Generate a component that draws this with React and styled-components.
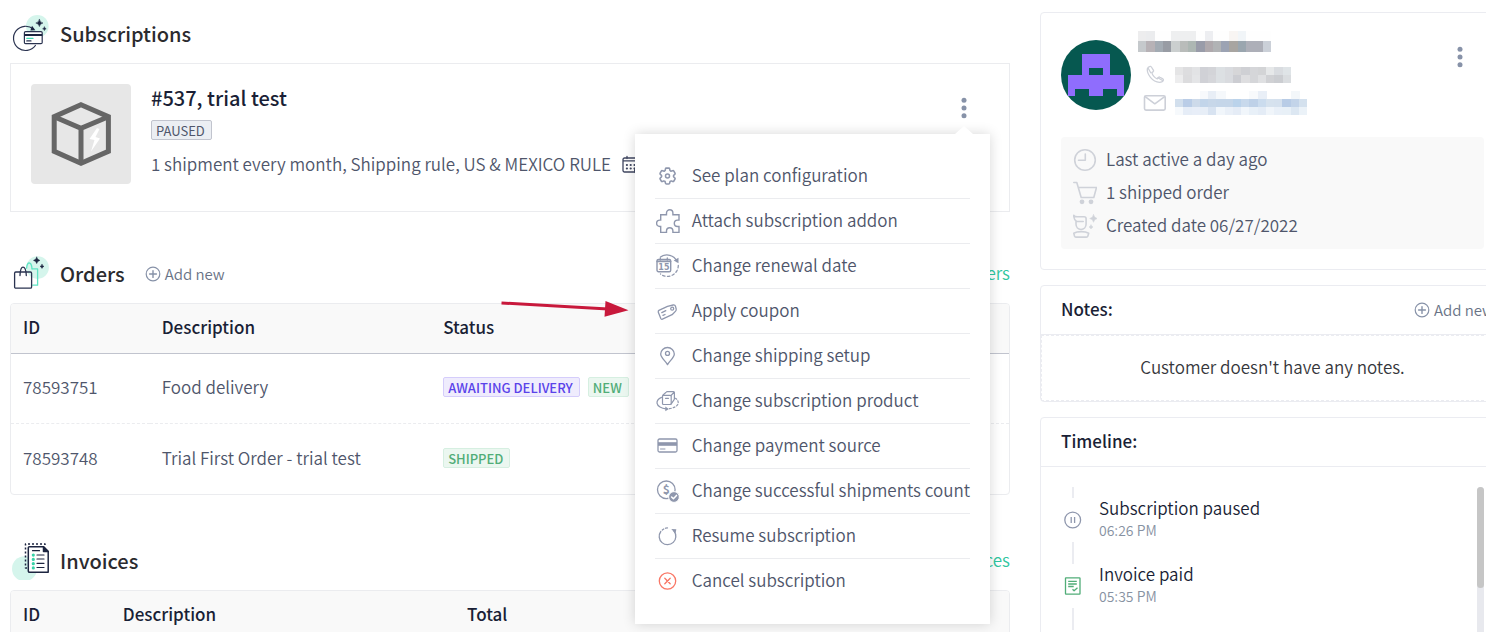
import React from 'react';
import styled, { createGlobalStyle, css } from 'styled-components';

const GlobalStyle = createGlobalStyle`
    * {
        box-sizing: border-box;
    }
    body {
        margin: 0;
        background: #ffffff;
        color: #4f566b;
        font-family: 'Source Sans Pro', 'Noto Sans CJK SC', 'Noto Sans', sans-serif;
        font-size: 17px;
        font-weight: 350;
        line-height: 24px;
    }
    h2, h3, p, ul {
        margin: 0;
        padding: 0;
    }
    ul {
        list-style: none;
    }
    button {
        background: none;
        border: 0;
        padding: 0;
        color: inherit;
        font: inherit;
        cursor: pointer;
    }
    svg {
        display: block;
        flex: none;
    }
`;

const Page = styled.div`
    position: relative;
    height: 100vh;
    overflow: hidden;
    padding-left: 10px;
`;

const Columns = styled.div`
    display: grid;
    grid-template-columns: minmax(0, 1000fr) minmax(0, 465fr);
    gap: 30px;
    margin-right: -19px;
`;

const MainColumn = styled.main`
    padding-top: 5px;
`;

const SideColumn = styled.aside`
    display: flex;
    flex-direction: column;
    gap: 15px;
    padding-top: 12px;
`;

const Section = styled.section`
    padding-bottom: ${({ $space }) => $space || 33}px;
`;

const SectionHeader = styled.header`
    display: flex;
    align-items: center;
    height: 58px;
    padding-left: 2px;
`;

const SectionTitle = styled.h2`
    margin-left: 10px;
    color: #2b2b2f;
    font-size: 20px;
    font-weight: 500;
    line-height: 30px;
`;

const AddButton = styled.button`
    display: flex;
    align-items: center;
    gap: 4px;
    margin-left: ${({ $push }) => ($push ? 'auto' : '20px')};
    color: #697386;
    font-size: 15px;
    line-height: 20px;
    white-space: nowrap;
`;

const ViewAll = styled.a`
    margin-left: auto;
    padding-bottom: 2px;
    color: #2fc6a0;
    text-decoration: none;
`;

const SubscriptionCard = styled.article`
    position: relative;
    display: flex;
    gap: 20px;
    padding: 20px;
    min-height: 149px;
    border: 1px solid #ebecef;
`;

const ProductImage = styled.div`
    width: 100px;
    height: 100px;
    border-radius: 4px;
    background: #e7e7e7;
`;

const SubscriptionInfo = styled.div`
    display: flex;
    flex-direction: column;
    align-items: flex-start;
`;

const SubscriptionName = styled.h3`
    color: #1a1f36;
    font-size: 20px;
    font-weight: 500;
    line-height: 28px;
    margin-bottom: 8px;
`;

const ShippingRule = styled.p`
    display: flex;
    align-items: center;
    gap: 11px;
    margin-top: 12px;
`;

const tones = {
    grey: css`
        color: #4f566b;
        background: #ebeef3;
        border-color: #c1c4ce;
        font-weight: 400;
    `,
    violet: css`
        color: #5a43ea;
        background: #efecfd;
        border-color: #d5cdfb;
    `,
    green: css`
        color: #51ad78;
        background: #ebf7f0;
        border-color: #d6efe1;
    `,
};

const Badge = styled.span`
    height: 20px;
    padding: 0 6px 0 4px;
    border: 1px solid;
    border-radius: 2px;
    font-size: 13px;
    font-weight: 500;
    line-height: 19px;
    ${({ $tone }) => tones[$tone]}
`;

const StatusList = styled.div`
    display: flex;
    gap: 8px;
`;

const MenuAnchor = styled.div`
    position: absolute;
    top: 31px;
    right: 19px;
    display: flex;
    justify-content: flex-end;
    padding-right: 17px;
`;

const KebabButton = styled.button`
    display: grid;
    place-items: center;
    width: 20px;
    height: 26px;
    color: #8792a8;
`;

const Menu = styled.ul`
    position: absolute;
    z-index: 2;
    top: 39px;
    right: 0;
    padding: 20px;
    background: #ffffff;
    box-shadow: 0 0 12px rgba(0, 0, 0, 0.16);
    &::before {
        content: '';
        position: absolute;
        top: -8px;
        right: 17px;
        border: solid transparent;
        border-width: 0 9px 8px;
        border-bottom-color: #ffffff;
    }
`;

const MenuItem = styled.li`
    height: 45px;
    border-bottom: 1px solid #ebecef;
    &:last-child {
        border-bottom-color: transparent;
    }
`;

const Label = styled.span`
    padding-bottom: 2px;
`;

const MenuButton = styled.button`
    display: flex;
    align-items: center;
    gap: 12px;
    width: 100%;
    height: 100%;
    padding-left: 1px;
    white-space: nowrap;
    svg {
        color: ${({ $danger }) => ($danger ? '#f97766' : '#8f97ad')};
    }
`;

const TableFrame = styled.div`
    border: 1px solid #ebecef;
    border-radius: 4px;
    overflow: hidden;
`;

const Table = styled.table`
    width: 100%;
    table-layout: fixed;
    border-collapse: collapse;
`;

const HeadCell = styled.th`
    width: ${({ $width }) => $width || 'auto'};
    height: 49px;
    padding: 0 12px 2px;
    border-bottom: 1px solid #c1c4ce;
    background: #f9f9f9;
    color: #1a1f36;
    font-weight: 500;
    text-align: left;
`;

const Cell = styled.td`
    height: 70px;
    padding: 0 12px 2px;
    tr + tr & {
        height: 71px;
        border-top: 1px dashed #ebecef;
    }
`;

const Card = styled.section`
    border: 1px solid #ebecf1;
    border-radius: 4px;
    background: #ffffff;
`;

const CustomerCard = styled(Card)`
    padding: 18px 20px 20px;
`;

const CustomerTop = styled.div`
    display: flex;
    align-items: flex-start;
    gap: 7px;
    height: 106px;
`;

const Avatar = styled.div`
    width: 70px;
    height: 70px;
    margin-top: 9px;
    border-radius: 50%;
    overflow: hidden;
    background: #065850;
`;

const Contact = styled.div`
    display: flex;
    flex-direction: column;
    flex: 1;
`;

const ContactRow = styled.div`
    display: flex;
    align-items: center;
    gap: 8px;
    height: 28px;
    padding-left: 5px;
    color: #cdd0d8;
    &:first-of-type {
        margin-top: 9px;
    }
`;

const CustomerKebab = styled(KebabButton)`
    margin: 13px 15px 0 0;
`;

const Facts = styled.ul`
    padding: 6px 12px 7px;
    border-radius: 4px;
    background: #f9f9f9;
`;

const Fact = styled.li`
    display: flex;
    align-items: center;
    gap: 9px;
    height: 33px;
    svg {
        color: #cfd2d9;
    }
`;

const CardHeader = styled.header`
    display: flex;
    align-items: center;
    height: 49px;
    padding: 0 10px 0 20px;
    border-bottom: 1px solid #ebecf1;
`;

const CardTitle = styled.h3`
    padding-bottom: 2px;
    color: #1a1f36;
    font-size: 17px;
    font-weight: 500;
`;

const EmptyNotes = styled.p`
    padding: 19px 20px 21px;
    border: 1px dashed #ebecf1;
    color: #36373c;
    text-align: center;
`;

const TimelineBody = styled.div`
    display: flex;
    justify-content: space-between;
    height: 400px;
    padding: 20px;
`;

const EventList = styled.ul`
    &::after {
        content: '';
        display: block;
        width: 2px;
        height: 11px;
        margin-left: 11px;
        background: #ebecf1;
    }
`;

const Event = styled.li`
    display: flex;
    gap: 14px;
    height: 66px;
`;

const Rail = styled.div`
    display: flex;
    flex-direction: column;
    align-items: center;
    justify-content: space-between;
    width: 24px;
    &::before,
    &::after {
        content: '';
        width: 2px;
        height: 11px;
        background: #ebecf1;
    }
`;

const EventText = styled.div`
    padding-top: 9px;
    color: #1a1f36;
`;

const EventTime = styled.time`
    display: block;
    color: #8792a2;
    font-size: 14px;
    line-height: 20px;
`;

const ScrollTrack = styled.div`
    width: 7px;
    border-radius: 4px;
    background: #e8e9ee;
`;

const ScrollThumb = styled.div`
    height: 101px;
    border-radius: 4px;
    background: #c6c6c6;
`;

const Pointer = styled.svg`
    position: absolute;
    z-index: 3;
    top: 298px;
    left: 500px;
`;

const Icon = ({ size = 24, children, ...rest }) => (
    <svg
        width={size}
        height={size}
        viewBox={`0 0 ${size} ${size}`}
        fill="none"
        stroke="currentColor"
        strokeWidth="1.3"
        strokeLinecap="round"
        strokeLinejoin="round"
        aria-hidden="true"
        {...rest}
    >
        {children}
    </svg>
);

const Sparkle = ({ x, y, r, fill = '#1d2540' }) => (
    <path
        d={`M${x} ${y - r}Q${x + r * 0.15} ${y - r * 0.15} ${x + r} ${y}Q${x + r * 0.15} ${y + r * 0.15} ${x} ${y + r}Q${x - r * 0.15} ${y + r * 0.15} ${x - r} ${y}Q${x - r * 0.15} ${y - r * 0.15} ${x} ${y - r}Z`}
        fill={fill}
        stroke={fill}
        strokeWidth="0.5"
    />
);

const SubscriptionsIcon = () => (
    <Icon size={38} stroke="#2a3350" strokeWidth="1.2">
        <circle cx="25.3" cy="11.3" r="11.3" fill="#d5f5ec" stroke="none" />
        <path d="M21.5 14.2A12.1 12.1 0 1 0 23.4 30.5" />
        <path d="M20 10.8l3.4 4.4-5 .3z" fill="#1d2540" stroke="none" />
        <rect x="12.4" y="16.6" width="17.8" height="12" rx="1.2" fill="#fff" />
        <path d="M12.4 20h17.8" stroke="#1d2540" strokeWidth="2" strokeLinecap="butt" />
        <path d="M14.8 23.4h6.2" stroke="#45d9b4" />
        <path d="M14.8 25.9h4.2" />
        <Sparkle x={27.4} y={8} r={3.6} />
        <Sparkle x={32.4} y={13.8} r={1.8} />
    </Icon>
);

const OrdersIcon = () => (
    <Icon size={38} stroke="#2a3350" strokeWidth="1.3">
        <circle cx="25.6" cy="12.6" r="11.3" fill="#d5f5ec" stroke="none" />
        <path d="M20 13.8h5.6v16.4h-4.8" stroke="#5fe3c3" />
        <path d="M14.6 13.2c.3-3.6 1-5.2 2.6-5.2s2.5 1.8 2.8 5.8" stroke="#5fe3c3" />
        <rect x="2.6" y="17" width="17" height="16.2" rx="1.2" />
        <path d="M8 20.5c.2-4.8 1-8.3 3-8.3s3.1 3.5 3.3 8.3" />
        <Sparkle x={24.7} y={5.4} r={3.2} />
        <Sparkle x={30} y={11.4} r={2} />
    </Icon>
);

const InvoicesIcon = () => (
    <Icon size={38} stroke="#1d2540" strokeWidth="1.5">
        <circle cx="12.5" cy="26.7" r="12.5" fill="#d5f5ec" stroke="none" />
        <path d="M15 26h-1.5V2h19.5v3" strokeDasharray="2 2" strokeLinecap="butt" />
        <path d="M17.5 4.7h14l4.7 4.8v20.7H17.5a1.2 1.2 0 0 1-1.2-1.2V6a1.2 1.2 0 0 1 1.2-1.3z" fill="#fff" />
        <path d="M31.5 4.7v4.8h4.7z" fill="#1d2540" />
        <path d="M20.5 8.7h7M25 13h7M25 17h7M25 21.3h7M25 25.5h7" strokeWidth="1.2" />
        <path d="M21.3 13v13" stroke="#37d3a8" strokeWidth="3.2" strokeDasharray="0.1 4.2" />
    </Icon>
);

const PlusCircleIcon = () => (
    <Icon size={16} stroke="#8792a8" strokeWidth="1.2">
        <circle cx="8" cy="8" r="6.8" />
        <path d="M8 4.6v6.8M4.6 8h6.8" strokeWidth="1.4" />
    </Icon>
);

const KebabIcon = () => (
    <Icon size={22} fill="currentColor" stroke="none">
        <circle cx="11" cy="3.3" r="2.5" />
        <circle cx="11" cy="11" r="2.5" />
        <circle cx="11" cy="18.7" r="2.5" />
    </Icon>
);

const BoxPicture = () => (
    <svg width="100" height="100" viewBox="0 0 100 100" fill="none" stroke="#666666" strokeWidth="5" aria-hidden="true">
        <path d="M50 20.7L77.4 32.7V67.3L50 79.3 23.2 67.3V32.7z" />
        <path d="M23.2 32.7L50 44.3l27.4-11.6M50 44v35" />
        <path d="M66 44l-7.5 11 5 1-3.5 11.5 9-13-4.5-1.5 4-8z" fill="#ffffff" stroke="none" />
    </svg>
);

const CalendarIcon = () => (
    <Icon size={22} stroke="#3f4660" strokeWidth="1.3">
        <path d="M16 18H2.5A1.5 1.5 0 0 1 1 16.5v-11A1.5 1.5 0 0 1 2.5 4h15A1.5 1.5 0 0 1 19 5.5V13M1 6.8h18M5 2.5v2M15 2.5v2" />
        <path d="M4.8 11h10M4.8 14.5h10" strokeWidth="2" strokeDasharray="0.2 3.6" />
        <circle cx="16.5" cy="16.5" r="4.5" fill="#3f4660" stroke="none" />
    </Icon>
);

const GearIcon = () => (
    <Icon strokeWidth="1.8">
        <path d="M9.594 3.94c.09-.542.56-.94 1.11-.94h2.593c.55 0 1.02.398 1.11.94l.213 1.281c.063.374.313.686.645.87.074.04.147.083.22.127.325.196.72.257 1.075.124l1.217-.456a1.125 1.125 0 0 1 1.37.49l1.296 2.247a1.125 1.125 0 0 1-.26 1.431l-1.003.827c-.293.241-.438.613-.43.992a7.723 7.723 0 0 1 0 .255c-.008.378.137.75.43.991l1.004.827c.424.35.534.955.26 1.43l-1.298 2.247a1.125 1.125 0 0 1-1.369.491l-1.217-.456c-.355-.133-.75-.072-1.076.124a6.47 6.47 0 0 1-.22.128c-.331.183-.581.495-.644.869l-.213 1.281c-.09.543-.56.94-1.11.94h-2.594c-.55 0-1.019-.398-1.11-.94l-.213-1.281c-.062-.374-.312-.686-.644-.87a6.52 6.52 0 0 1-.22-.127c-.325-.196-.72-.257-1.076-.124l-1.217.456a1.125 1.125 0 0 1-1.369-.49l-1.297-2.247a1.125 1.125 0 0 1 .26-1.431l1.004-.827c.292-.24.437-.613.43-.991a6.932 6.932 0 0 1 0-.255c.007-.38-.138-.751-.43-.992l-1.004-.827a1.125 1.125 0 0 1-.26-1.43l1.297-2.247a1.125 1.125 0 0 1 1.37-.491l1.216.456c.356.133.751.072 1.076-.124.072-.044.146-.086.22-.128.332-.183.582-.495.644-.869l.214-1.28Z" transform="translate(1 1.5) scale(0.88)" />
        <circle cx="11.5" cy="12" r="2" strokeWidth="1.5" />
    </Icon>
);

const PuzzleIcon = () => (
    <Icon strokeWidth="1.4" strokeLinejoin="miter">
        <path d="M4.7 5.8h5.8V4a3.2 3.2 0 0 1 6.4 0v1.8h6.1v5.3h-1.5a3.2 3.2 0 0 0 0 6.4h1.5v5.9h-6.1v-1.5a3.2 3.2 0 0 0-6.4 0v1.5H4.7v-5.9H3.8a3.2 3.2 0 0 1 0-6.4h.9z" />
    </Icon>
);

const RenewalIcon = () => (
    <Icon>
        <path d="M4.5 3A11 11 0 0 1 21 7.5" />
        <path d="M22.5 3.8v5.5l-4.8-2.8z" fill="currentColor" stroke="none" />
        <path d="M22.3 11.5A11 11 0 0 1 4.5 20" strokeDasharray="2.4 2.4" />
        <rect x="1" y="5.5" width="13.7" height="12.3" rx="1.5" fill="#fff" strokeWidth="1.4" />
        <path d="M1.2 7.3h13.3" strokeWidth="1.8" />
        <path d="M4.3 4v2M11.3 4v2" />
        <text x="7.9" y="15.9" fill="currentColor" stroke="none" fontFamily="'DejaVu Sans', sans-serif" fontSize="8" fontWeight="700" textAnchor="middle">15</text>
    </Icon>
);

const CouponIcon = () => (
    <Icon strokeWidth="1.3">
        <path d="M2.9 11.4l8.6-4 5.7-1.4c1.2-.2 1.9.2 2.3 1.3l.7 2.7c.2.9 0 1.5-.6 2.1l-3.5 3.6-9.7 4.5c-.8.3-1.3.1-1.6-.6l-2.5-6.3c-.2-.9 0-1.5.6-1.9z" />
        <circle cx="16.2" cy="9.7" r="1.5" />
        <path d="M5.8 13.6l4-1.9M7 16.4l2-.9" />
    </Icon>
);

const PinIcon = () => (
    <Icon>
        <path d="M11.5 20.6C9.5 17 4.7 13.7 4.7 10a6.8 6.5 0 0 1 13.6 0c0 3.7-4.8 7-6.8 10.6z" />
        <circle cx="11.5" cy="9.4" r="2" />
    </Icon>
);

const ProductIcon = () => (
    <Icon strokeWidth="1.2">
        <rect x="6.5" y="6.3" width="8.7" height="9.2" rx="1" />
        <path d="M6.8 6.3l3.4-3.2c.3-.3.6-.4 1-.4h6.3c.6 0 .9.3.9.9v6.2c0 .4-.1.7-.4 1l-2.8 4M15 6.5l3.2-3.4M9.5 9.3h3" />
        <path d="M5.5 8.4C2.5 9.8.8 12 1 14.2c.4 3 4.6 5.3 9 5.6" />
        <path d="M9.3 17.6l3.6 2.3-3.6 2.3z" fill="currentColor" stroke="none" />
        <path d="M13.5 19.6c4-.5 8.5-2.6 8.7-5.5.2-2-.9-3.6-2.7-4.8" strokeDasharray="1.8 2" />
    </Icon>
);

const PaymentIcon = () => (
    <Icon>
        <rect x="2" y="5" width="19" height="13" rx="1.5" />
        <path d="M2 10h19" strokeWidth="3.6" strokeLinecap="butt" />
        <path d="M4.5 15h4.5" strokeWidth="1" />
    </Icon>
);

const CountIcon = () => (
    <Icon>
        <circle cx="10.3" cy="10.8" r="8.8" />
        <text x="10.3" y="15" fill="currentColor" stroke="none" fontSize="12" fontWeight="700" textAnchor="middle">$</text>
        <circle cx="18" cy="18" r="5.4" fill="currentColor" stroke="#fff" strokeWidth="1" />
        <path d="M15.6 18l1.8 1.8 3.1-3.4" stroke="#fff" strokeWidth="1.5" />
    </Icon>
);

const ResumeIcon = () => (
    <Icon>
        <path d="M18 7.2A8.3 8.3 0 1 1 4.8 7.5" />
        <path d="M6.3 6A8.3 8.3 0 0 1 12.5 4" strokeDasharray="1.8 2" />
        <path d="M15.3 5l5 .3-.8 4.5z" fill="currentColor" stroke="none" />
    </Icon>
);

const CancelIcon = () => (
    <Icon>
        <circle cx="11.5" cy="12" r="8.2" />
        <path d="M8.8 9.3l5.4 5.4M14.2 9.3l-5.4 5.4" />
    </Icon>
);

const PhoneIcon = () => (
    <Icon>
        <path d="M7.2 3.4c-1 .2-2.5 1-2.9 2.5-.4 5 4.8 13 12.2 13.4 1.8 0 3.5-.9 3.9-2.2.1-.5-.1-.9-.5-1.2l-3-1.7c-.5-.3-1-.2-1.4.3l-1.2 1.4c-2.6-1.1-4.7-3.6-5.5-6.3l1.4-1c.4-.3.5-.8.3-1.3L8.4 4c-.3-.5-.7-.7-1.2-.6z" />
        <path d="M5.2 5.2l2.5 4.5M19.5 17.5l-4.6-2.8" />
    </Icon>
);

const MailIcon = () => (
    <Icon strokeWidth="1.6">
        <rect x="1.5" y="4.8" width="20.7" height="14.3" rx="1.5" />
        <path d="M2.5 5.8l9.3 7 9.5-7" />
    </Icon>
);

const ClockIcon = () => (
    <Icon strokeWidth="1.6">
        <circle cx="12" cy="12" r="10.3" />
        <path d="M12.3 6v6.2H5.5" />
    </Icon>
);

const CartIcon = () => (
    <Icon strokeWidth="1.6">
        <path d="M0.8 1.5h3l4.4 15h12.6l2.7-10H5.3" />
        <circle cx="9" cy="20.8" r="2.4" fill="currentColor" stroke="none" />
        <circle cx="18" cy="20.8" r="2.4" fill="currentColor" stroke="none" />
    </Icon>
);

const NewUserIcon = () => (
    <Icon strokeWidth="1.6">
        <path d="M3 7.5v2.6c0 3.2 2.2 5.4 5 5.4s5.1-2.2 5.1-5.4V4.800c0-1.200-.8-2-2-2H4.200C2.800 2.800 1.500 2.300.7 1.300c0 2.700.9 4.800 2.900 6.200h6.600" />
        <path d="M.8 19.200c2-1.200 4.400-1.600 7.400-1.600s5.500.4 7.500 1.600l-.8 2.800c-.2.700-.7 1.100-1.500 1.100H3c-.8 0-1.300-.4-1.500-1.100z" />
        <Sparkle x={20.5} y={4.5} r={3.8} fill="currentColor" />
        <Sparkle x={18} y={13} r={2} fill="currentColor" />
    </Icon>
);

const PausedIcon = () => (
    <Icon size={18} stroke="#8f97ad">
        <circle cx="8.7" cy="9" r="7.9" />
        <path d="M7.2 6v6M10.6 6v6" strokeLinecap="butt" />
    </Icon>
);

const PaidIcon = () => (
    <Icon size={18} stroke="#51ad78">
        <rect x="1.5" y="0.8" width="14.5" height="16.4" rx="0.5" />
        <path d="M4.2 4.3h8.6M4.2 7h8.6M4.2 9.5h5.5M8.5 12.3l1.6 1.5 3.4-3" strokeLinecap="butt" />
    </Icon>
);

const AvatarPicture = () => (
    <svg width="70" height="70" viewBox="0 0 70 70" aria-hidden="true">
        <path d="M21 14h28v21h14v21h-7v-7H42v7H28v-7H14v7H7V35h14zM28 28v7h14v-7z" fill="#8f6dfd" fillRule="evenodd" />
    </svg>
);

const Mosaic = ({ width, rows, label }) => {
    const height = rows.reduce((sum, row) => sum + row.height, 0);
    let top = 0;
    return (
        <svg width={width} height={height} role="img" aria-label={label} shapeRendering="crispEdges">
            {rows.map((row, r) => {
                const y = top;
                const cell = width / row.colors.length;
                top += row.height;
                return row.colors.map((color, c) => (
                    color && <rect key={`${r}-${c}`} x={c * cell} y={y} width={cell + 1} height={row.height} fill={color} />
                ));
            })}
        </svg>
    );
};

const nameRows = [
    { height: 10, colors: ['#ededee', '#ebecee', '#fefefe', '#fefefe', '#eeeff0', '#eeeff0', '#eeeff0', '#fefefe', '#edeef1', '#fefefe', '#fefefe', '#f8f5f3', '#f1f5f8', '#fefefe', '#fefefe', '#fefefe'] },
    { height: 11, colors: ['#c5c9cc', '#b7b2b6', '#a3abb3', '#989ca4', '#cbcfcf', '#b9bcba', '#adb7b3', '#999ca9', '#afa9ad', '#b1b3b5', '#9ca3b3', '#a8a5a1', '#9aa6af', '#adafb8', '#adafb8', '#cbd0d8'] },
];

const phoneRows = [
    { height: 8, colors: ['#e5e5e6', '#dddddf', '#e2e3e5', '#d0d1d6', '#d3d4d8', '#dce0e3', '#d9dbdf', '#d6d6d8', '#cfd0d4', '#d5d6d9', '#d3d4d6', '#e6e8e9', '#d9dce0', '#dfe4e7'] },
    { height: 8, colors: ['#ededee', '#dcdcde', '#e4e5e7', '#d0d1d6', '#d5d6da', '#dce0e3', '#d9dbdf', '#cccdd2', '#dedee0', '#d5d6d9', '#dfe0e2', '#d0d1d4', '#cbcdd1', '#dadde0'] },
];

const mailRows = [
    { height: 8, colors: [null, null, null, '#f7f9fc', '#e8eef6', '#f5f8fb', null, null, null, '#f8fafc', '#e9eff7', null, null, null, '#f3f7fa', null] },
    { height: 8, colors: ['#d2dfed', '#bacde7', '#cddaea', '#c2d5ea', '#c7d7e9', '#c5d6e9', '#c5d6e9', '#bbd3eb', '#c8d9ec', '#bed1e8', '#cbdcee', '#d6e2ee', '#d5e1ee', '#b8cce6', '#c3d4e9', '#d4e1ee'] },
    { height: 8, colors: ['#f6f9fc', '#e6edf7', '#e8eef8', '#e7eef7', '#d8e3f1', '#f1f6fb', '#eaf0f8', '#e5ecf6', '#f1f6fb', '#e8f0f8', '#e4ecf6', '#f0f5fa', '#e9f0f8', '#e8f0f7', '#dce7f2', '#ebf2f8'] },
];

const menuItems = [
    { label: 'See plan configuration', icon: GearIcon },
    { label: 'Attach subscription addon', icon: PuzzleIcon },
    { label: 'Change renewal date', icon: RenewalIcon },
    { label: 'Apply coupon', icon: CouponIcon },
    { label: 'Change shipping setup', icon: PinIcon },
    { label: 'Change subscription product', icon: ProductIcon },
    { label: 'Change payment source', icon: PaymentIcon },
    { label: 'Change successful shipments count', icon: CountIcon },
    { label: 'Resume subscription', icon: ResumeIcon },
    { label: 'Cancel subscription', icon: CancelIcon, danger: true },
];

const orders = [
    {
        id: '78593751',
        description: 'Food delivery',
        statuses: [{ text: 'AWAITING DELIVERY', tone: 'violet' }, { text: 'NEW', tone: 'green' }],
    },
    {
        id: '78593748',
        description: 'Trial First Order - trial test',
        statuses: [{ text: 'SHIPPED', tone: 'green' }],
    },
];

const events = [
    { title: 'Subscription paused', time: '06:26 PM', icon: PausedIcon },
    { title: 'Invoice paid', time: '05:35 PM', icon: PaidIcon },
];

const Subscription = () => (
    <SubscriptionCard>
        <ProductImage><BoxPicture /></ProductImage>
        <SubscriptionInfo>
            <SubscriptionName>#537, trial test</SubscriptionName>
            <Badge $tone="grey">PAUSED</Badge>
            <ShippingRule>
                <Label>1 shipment every month, Shipping rule, US &amp; MEXICO RULE</Label>
                <CalendarIcon />
            </ShippingRule>
        </SubscriptionInfo>
        <MenuAnchor>
            <KebabButton type="button" aria-label="Subscription actions" aria-expanded="true">
                <KebabIcon />
            </KebabButton>
            <Menu>
                {menuItems.map(({ label, icon: ItemIcon, danger }) => (
                    <MenuItem key={label}>
                        <MenuButton type="button" $danger={danger}>
                            <ItemIcon />
                            <Label>{label}</Label>
                        </MenuButton>
                    </MenuItem>
                ))}
            </Menu>
        </MenuAnchor>
    </SubscriptionCard>
);

const Customer = () => (
    <CustomerCard>
        <CustomerTop>
            <Avatar><AvatarPicture /></Avatar>
            <Contact>
                <Mosaic width={133} rows={nameRows} label="Name" />
                <ContactRow>
                    <PhoneIcon />
                    <Mosaic width={116} rows={phoneRows} label="Phone" />
                </ContactRow>
                <ContactRow>
                    <MailIcon />
                    <Mosaic width={132} rows={mailRows} label="Email" />
                </ContactRow>
            </Contact>
            <CustomerKebab type="button" aria-label="Customer actions">
                <KebabIcon />
            </CustomerKebab>
        </CustomerTop>
        <Facts>
            <Fact><ClockIcon /><Label>Last active a day ago</Label></Fact>
            <Fact><CartIcon /><Label>1 shipped order</Label></Fact>
            <Fact><NewUserIcon /><Label>Created date 06/27/2022</Label></Fact>
        </Facts>
    </CustomerCard>
);

const App = () => (
    <>
        <GlobalStyle />
        <Page>
            <Columns>
                <MainColumn>
                    <Section>
                        <SectionHeader>
                            <SubscriptionsIcon />
                            <SectionTitle>Subscriptions</SectionTitle>
                        </SectionHeader>
                        <Subscription />
                    </Section>
                    <Section $space={37}>
                        <SectionHeader>
                            <OrdersIcon />
                            <SectionTitle>Orders</SectionTitle>
                            <AddButton type="button"><PlusCircleIcon />Add new</AddButton>
                            <ViewAll href="#orders">All orders</ViewAll>
                        </SectionHeader>
                        <TableFrame>
                            <Table>
                                <thead>
                                    <tr>
                                        <HeadCell $width="13.9%">ID</HeadCell>
                                        <HeadCell $width="28.2%">Description</HeadCell>
                                        <HeadCell>Status</HeadCell>
                                    </tr>
                                </thead>
                                <tbody>
                                    {orders.map(({ id, description, statuses }) => (
                                        <tr key={id}>
                                            <Cell>{id}</Cell>
                                            <Cell>{description}</Cell>
                                            <Cell>
                                                <StatusList>
                                                    {statuses.map(({ text, tone }) => (
                                                        <Badge key={text} $tone={tone}>{text}</Badge>
                                                    ))}
                                                </StatusList>
                                            </Cell>
                                        </tr>
                                    ))}
                                </tbody>
                            </Table>
                        </TableFrame>
                    </Section>
                    <Section>
                        <SectionHeader>
                            <InvoicesIcon />
                            <SectionTitle>Invoices</SectionTitle>
                            <ViewAll href="#invoices">All invoices</ViewAll>
                        </SectionHeader>
                        <TableFrame>
                            <Table>
                                <thead>
                                    <tr>
                                        <HeadCell $width="10%">ID</HeadCell>
                                        <HeadCell $width="34.5%">Description</HeadCell>
                                        <HeadCell>Total</HeadCell>
                                    </tr>
                                </thead>
                            </Table>
                        </TableFrame>
                    </Section>
                </MainColumn>
                <SideColumn>
                    <Customer />
                    <Card>
                        <CardHeader>
                            <CardTitle>Notes:</CardTitle>
                            <AddButton type="button" $push><PlusCircleIcon />Add new</AddButton>
                        </CardHeader>
                        <EmptyNotes>Customer doesn't have any notes.</EmptyNotes>
                    </Card>
                    <Card>
                        <CardHeader>
                            <CardTitle>Timeline:</CardTitle>
                        </CardHeader>
                        <TimelineBody>
                            <EventList>
                                {events.map(({ title, time, icon: EventIcon }) => (
                                    <Event key={title}>
                                        <Rail><EventIcon /></Rail>
                                        <EventText>
                                            {title}
                                            <EventTime>{time}</EventTime>
                                        </EventText>
                                    </Event>
                                ))}
                            </EventList>
                            <ScrollTrack><ScrollThumb /></ScrollTrack>
                        </TimelineBody>
                    </Card>
                </SideColumn>
            </Columns>
            <Pointer width="130" height="22" viewBox="0 0 130 22" aria-hidden="true">
                <path d="M1.5 5L108 11" stroke="#c8193c" strokeWidth="3" />
                <path d="M105.5 3l23 9.2-24 6.5z" fill="#c8193c" />
            </Pointer>
        </Page>
    </>
);

export default App;
